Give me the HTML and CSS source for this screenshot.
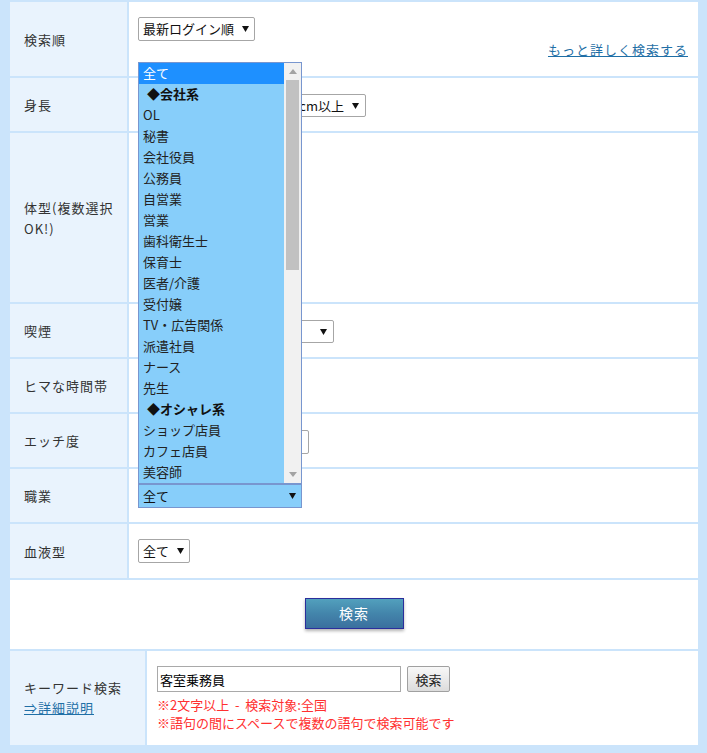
FILE: index.html
```html
<!DOCTYPE html>
<html lang="ja">
<head>
<meta charset="utf-8">
<title>検索</title>
<link rel="stylesheet" href="styles.css">
</head>
<body>
<div class="frame">
  <div class="tbl">
    <div class="lab">検索順</div>
    <div class="val val-top">
      <span class="sel">最新ログイン順<svg class="arr" width="7" height="6" viewBox="0 0 7 6"><path d="M0 0h7L3.5 6z"/></svg></span>
      <a class="more" href="#">もっと詳しく検索する</a>
    </div>

    <div class="lab">身長</div>
    <div class="val"><span class="sel sel-height">cm以上<svg class="arr" width="7" height="6" viewBox="0 0 7 6"><path d="M0 0h7L3.5 6z"/></svg></span></div>

    <div class="lab">体型(複数選択OK!)</div>
    <div class="val"></div>

    <div class="lab">喫煙</div>
    <div class="val"><span class="sel sel-smoke"><svg class="arr arr-end" width="7" height="6" viewBox="0 0 7 6"><path d="M0 0h7L3.5 6z"/></svg></span></div>

    <div class="lab">ヒマな時間帯</div>
    <div class="val"></div>

    <div class="lab">エッチ度</div>
    <div class="val"><span class="sel sel-h"></span></div>

    <div class="lab">職業</div>
    <div class="val">
      <span class="sel sel-job">全て<svg class="arr arr-end" width="7" height="6" viewBox="0 0 7 6"><path d="M0 0h7L3.5 6z"/></svg>
        <span class="dd">
          <span class="opts">
            <span class="opt opt-on">全て</span>
            <span class="opt opt-grp">◆会社系</span>
            <span class="opt">OL</span>
            <span class="opt">秘書</span>
            <span class="opt">会社役員</span>
            <span class="opt">公務員</span>
            <span class="opt">自営業</span>
            <span class="opt">営業</span>
            <span class="opt">歯科衛生士</span>
            <span class="opt">保育士</span>
            <span class="opt">医者/介護</span>
            <span class="opt">受付嬢</span>
            <span class="opt">TV・広告関係</span>
            <span class="opt">派遣社員</span>
            <span class="opt">ナース</span>
            <span class="opt">先生</span>
            <span class="opt opt-grp">◆オシャレ系</span>
            <span class="opt">ショップ店員</span>
            <span class="opt">カフェ店員</span>
            <span class="opt">美容師</span>
          </span>
          <span class="sb">
            <span class="sb-btn"><svg width="8" height="5" viewBox="0 0 8 5"><path d="M0 5L4 0L8 5z"/></svg></span>
            <span class="sb-thumb"></span>
            <span class="sb-space"></span>
            <span class="sb-btn"><svg width="8" height="5" viewBox="0 0 8 5"><path d="M0 0h8L4 5z"/></svg></span>
          </span>
        </span>
      </span>
    </div>

    <div class="lab">血液型</div>
    <div class="val"><span class="sel">全て<svg class="arr" width="7" height="6" viewBox="0 0 7 6"><path d="M0 0h7L3.5 6z"/></svg></span></div>
  </div>

  <div class="btnrow">
    <button class="go" type="button">検索</button>
  </div>

  <div class="kw">
    <div class="lab lab-kw">
      <div>キーワード検索<br><a class="detail" href="#">⇒詳細説明</a></div>
    </div>
    <div class="kwval">
      <div class="kwline">
        <span class="kwinput">客室乗務員</span>
        <button class="kwbtn" type="button">検索</button>
      </div>
      <p class="note">※2文字以上&nbsp; - &nbsp;検索対象:全国<br>※語句の間にスペースで複数の語句で検索可能です</p>
    </div>
  </div>
</div>
</body>
</html>
```

FILE: styles.css
```css
html, body {
  margin: 0;
  padding: 0;
}
body {
  font-family: "Noto Sans CJK JP", "Noto Sans", sans-serif;
  background: #cbe4fb;
}
.frame {
  width: 707px;
  height: 753px;
  box-sizing: border-box;
  background: #cbe4fb;
  padding: 0 9px 8px 10px;
  display: flex;
  flex-direction: column;
  gap: 2px;
}
.tbl {
  display: grid;
  grid-template-columns: 117px 569px;
  grid-template-rows: 74px 53px 169px 53px 53px 53px 53px 54px;
  gap: 2px;
  padding-top: 2px;
}
.lab {
  background: #e9f3fd;
  display: flex;
  align-items: center;
  padding: 0 8px 0 14px;
  font-size: 13px;
  letter-spacing: 1px;
  line-height: 21px;
  color: #333;
}
.val {
  background: #fff;
  display: flex;
  align-items: center;
  padding: 0 9px;
  position: relative;
}
.val-top {
  flex-direction: column;
  align-items: flex-start;
  padding: 15px 10px 0 9px;
}
.more {
  align-self: flex-end;
  margin-top: 1px;
  font-size: 13px;
  letter-spacing: 1px;
  line-height: 16px;
  color: #1f6fa6;
  text-decoration: underline;
}
.sel {
  display: inline-flex;
  align-items: center;
  box-sizing: border-box;
  height: 24px;
  border: 1px solid #a6a6a6;
  border-radius: 2px;
  background: #fff;
  padding: 0 5px 0 4px;
  font-size: 13px;
  line-height: 18px;
  color: #111;
  white-space: nowrap;
}
.arr {
  margin-left: 8px;
  fill: #111;
  flex: none;
}
.arr-end {
  margin-left: auto;
}
.sel-height {
  width: 228px;
  height: 23px;
  margin-top: 2px;
  justify-content: flex-end;
  padding-right: 6px;
}
.sel-smoke {
  width: 196px;
  height: 23px;
  margin-top: 2px;
  padding-right: 6px;
}
.sel-h {
  width: 171px;
  margin-top: 2px;
}
.sel-job {
  width: 164px;
  background: #87cefa;
  border-color: #7896cf;
  border-radius: 0;
  position: relative;
  padding-right: 5px;
}
.dd {
  position: absolute;
  left: -1px;
  bottom: calc(100% + 1px);
  width: 164px;
  box-sizing: border-box;
  border: 1px solid #7896cf;
  display: flex;
  background: #87cefa;
  z-index: 5;
}
.opts {
  flex: 1;
  display: flex;
  flex-direction: column;
}
.opt {
  display: block;
  height: 21px;
  line-height: 20px;
  padding-left: 4px;
  font-size: 13px;
  color: #222;
  white-space: nowrap;
}
.opt-on {
  background: #1e90ff;
  color: #fff;
}
.opt-grp {
  font-weight: bold;
  padding-left: 8px;
  color: #111;
}
.sb {
  width: 17px;
  background: #f1f1f1;
  display: flex;
  flex-direction: column;
  align-items: center;
}
.sb-btn {
  height: 17px;
  width: 17px;
  display: flex;
  align-items: center;
  justify-content: center;
  fill: #a3a3a3;
}
.sb-thumb {
  width: 13px;
  height: 190px;
  background: #c1c1c1;
}
.sb-space {
  flex: 1;
}
.btnrow {
  height: 69px;
  background: #fff;
  display: flex;
  align-items: center;
  justify-content: center;
}
.go {
  width: 99px;
  height: 31px;
  margin-top: -3px;
  border: 1px solid #2b2e9c;
  background: linear-gradient(#52a0bd, #4385ab 50%, #3b6f9e);
  box-shadow: 0 2px 3px rgba(0, 0, 0, 0.3);
  color: #fff;
  font-family: "Noto Sans CJK JP", sans-serif;
  font-size: 14px;
  letter-spacing: 1px;
  padding: 0;
  cursor: pointer;
}
.kw {
  height: 94px;
  display: grid;
  grid-template-columns: 135px 551px;
  gap: 2px;
}
.lab-kw {
  line-height: 20px;
}
.detail {
  color: #1f6fa6;
  text-decoration: underline;
}
.kwval {
  background: #fff;
  padding: 15px 10px 0 10px;
}
.kwline {
  display: flex;
  gap: 6px;
}
.kwinput {
  display: flex;
  align-items: center;
  box-sizing: border-box;
  width: 244px;
  height: 26px;
  border: 1px solid #a9a9a9;
  padding-left: 2px;
  font-size: 13px;
  color: #000;
}
.kwbtn {
  box-sizing: border-box;
  width: 43px;
  height: 26px;
  border: 1px solid #a0a0a0;
  border-radius: 2px;
  background: linear-gradient(#f8f8f8, #dcdcdc);
  font-family: "Noto Sans CJK JP", sans-serif;
  font-size: 13px;
  color: #222;
  padding: 0;
}
.note {
  margin: 4px 0 0 0;
  font-size: 13px;
  line-height: 18px;
  color: #ff3030;
}
```
